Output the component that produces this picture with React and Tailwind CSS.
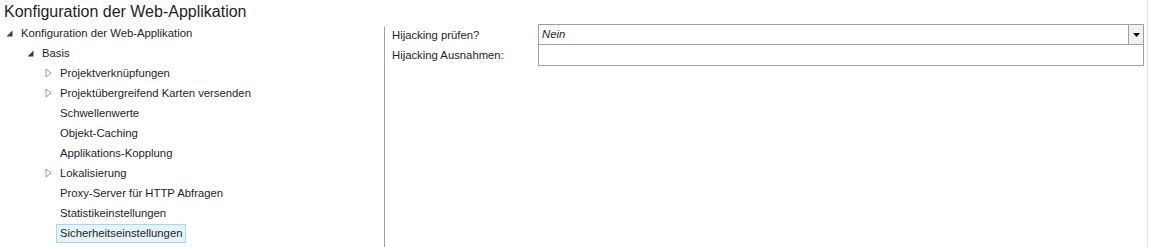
const FONT = { fontFamily: '"Liberation Sans", Arial, sans-serif' };

const children = [
  { label: "Projektverknüpfungen", expandable: true },
  { label: "Projektübergreifend Karten versenden", expandable: true },
  { label: "Schwellenwerte" },
  { label: "Objekt-Caching" },
  { label: "Applikations-Kopplung" },
  { label: "Lokalisierung", expandable: true },
  { label: "Proxy-Server für HTTP Abfragen" },
  { label: "Statistikeinstellungen" },
  { label: "Sicherheitseinstellungen", selected: true },
];

function Expanded() {
  return (
    <svg width="7" height="7" viewBox="0 0 7 7" className="shrink-0">
      <polygon points="6.5,0.5 6.5,6.5 0.5,6.5" fill="#3c3c3c" />
    </svg>
  );
}

function Collapsed() {
  return (
    <svg width="7" height="10" viewBox="0 0 7 10" className="shrink-0">
      <polygon points="1,1 6,5 1,9" fill="none" stroke="#9a9a9a" strokeWidth="1" />
    </svg>
  );
}

function Row({ indent, icon, children, selected }) {
  return (
    <div className="flex items-center h-[20px]" style={{ paddingLeft: indent }}>
      <div className="w-[14px] flex items-center">{icon}</div>
      <span
        className={`text-[11.3px] leading-[17px] px-[3px] -ml-[3px] border ${
          selected ? "bg-[#e5f3fb] border-[#a5d9f3]" : "border-transparent"
        } text-[#1e1e1e]`}
      >
        {children}
      </span>
    </div>
  );
}

export default function App() {
  return (
    <div className="w-[1149px] h-[247px] bg-white flex flex-col overflow-hidden pr-[1px]" style={FONT}>
      <div className="flex flex-col h-full border-r border-[#e3e3e3]">
        <div className="h-[23px] pl-[4px] pt-[1px] text-[16px] leading-[22px] text-[#1e1e1e]">
          Konfiguration der Web-Applikation
        </div>

        <div className="flex flex-1">
          {/* tree */}
          <div className="w-[384px]">
            <Row indent={6} icon={<Expanded />}>Konfiguration der Web-Applikation</Row>
            <Row indent={27} icon={<Expanded />}>Basis</Row>
            {children.map((c) => (
              <Row
                key={c.label}
                indent={45}
                icon={c.expandable ? <Collapsed /> : null}
                selected={c.selected}
              >
                {c.label}
              </Row>
            ))}
          </div>

          {/* splitter */}
          <div className="w-px bg-[#a0a0a0] mt-[4px]" />

          {/* form */}
          <div className="flex-1 pl-[7px] pt-[1px] pr-[3px]">
            <div className="flex h-[21px]">
              <div className="w-[146px] text-[11.3px] leading-[21px] pt-[1px] text-[#1e1e1e]">Hijacking prüfen?</div>
              <div className="flex-1 flex border border-[#a0a0a0]">
                <div className="flex-1 text-[11.3px] italic leading-[19px] pl-[3px] text-[#1e1e1e]">Nein</div>
                <div className="w-[15px] bg-[#f0f0f0] border-l border-[#a0a0a0] flex items-center justify-center">
                  <svg width="7" height="4" viewBox="0 0 7 4">
                    <polygon points="0,0 7,0 3.5,4" fill="#000" />
                  </svg>
                </div>
              </div>
            </div>
            <div className="flex h-[21px]">
              <div className="w-[146px] text-[11.3px] leading-[21px] text-[#1e1e1e]">Hijacking Ausnahmen:</div>
              <div className="flex-1 border border-t-0 border-[#a0a0a0]" />
            </div>
          </div>
        </div>
      </div>
    </div>
  );
}
